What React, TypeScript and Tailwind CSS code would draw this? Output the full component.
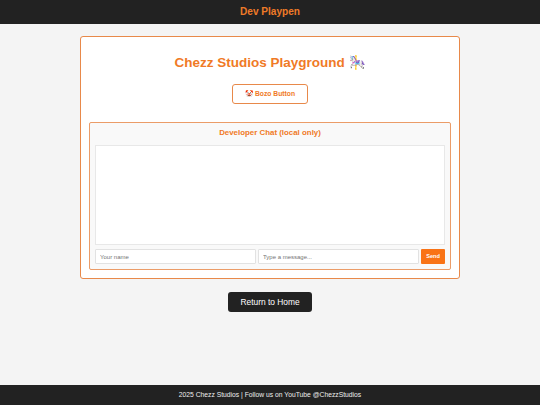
const App = () => {
  return (
    <div className="flex min-h-[405px] flex-col bg-[#f4f4f4] font-['Liberation_Sans',sans-serif]">
      <header className="flex h-[23.5px] items-center justify-center bg-[#222222] text-[10.1px] font-bold text-[#ee7a28]">
        Dev Playpen
      </header>

      <main className="flex flex-1 flex-col items-center pt-[12.5px]">
        <section className="flex h-[243px] w-[380px] flex-col items-center rounded-[3px] border border-[#e8894a] bg-white px-2">
          <h1 className="mt-4 text-[13.5px] leading-[20px] font-bold text-[#f07a26]">
            Chezz Studios Playground <span>🎠</span>
          </h1>
          <button className="mt-[11px] flex h-5 w-[76px] items-center justify-center gap-0.5 rounded-[3px] border border-[#e8894a] bg-white text-[6.75px] font-bold text-[#f07a26]">
            <span>🤡</span> Bozo Button
          </button>

          {/* Chat panel */}
          <div className="mt-[18px] flex h-[148px] w-[362px] flex-col rounded-[2px] border border-[#eb9c68] bg-[#f9f9f9] px-[5px]">
            <h2 className="mt-1 text-center text-[7.9px] leading-[11px] font-bold text-[#f07a26]">
              Developer Chat (local only)
            </h2>
            <div className="mt-[7px] h-[100px] border border-[#e8e8e8] bg-white"></div>
            <div className="mt-1 flex h-[15px] gap-0.5">
              <input
                placeholder="Your name"
                className="h-[15px] w-[161px] rounded-[1px] border border-[#e2e2e2] bg-white px-1 text-[6px] placeholder:text-[#757575]"
              />
              <input
                placeholder="Type a message..."
                className="h-[15px] w-[161px] rounded-[1px] border border-[#e2e2e2] bg-white px-1 text-[6px] placeholder:text-[#757575]"
              />
              <button className="h-[15px] w-6 rounded-[1px] bg-[#f97316] text-[5.6px] font-bold text-white">
                Send
              </button>
            </div>
          </div>
        </section>

        <button className="mt-[13px] h-5 w-[84px] rounded-[3px] bg-[#222222] text-[8.4px] text-white">
          Return to Home
        </button>
      </main>

      <footer className="flex h-5 items-center justify-center bg-[#222222] text-[6.75px] text-[#eeeeee]">
        2025 Chezz Studios | Follow us on YouTube @ChezzStudios
      </footer>
    </div>
  );
};

export default App;
